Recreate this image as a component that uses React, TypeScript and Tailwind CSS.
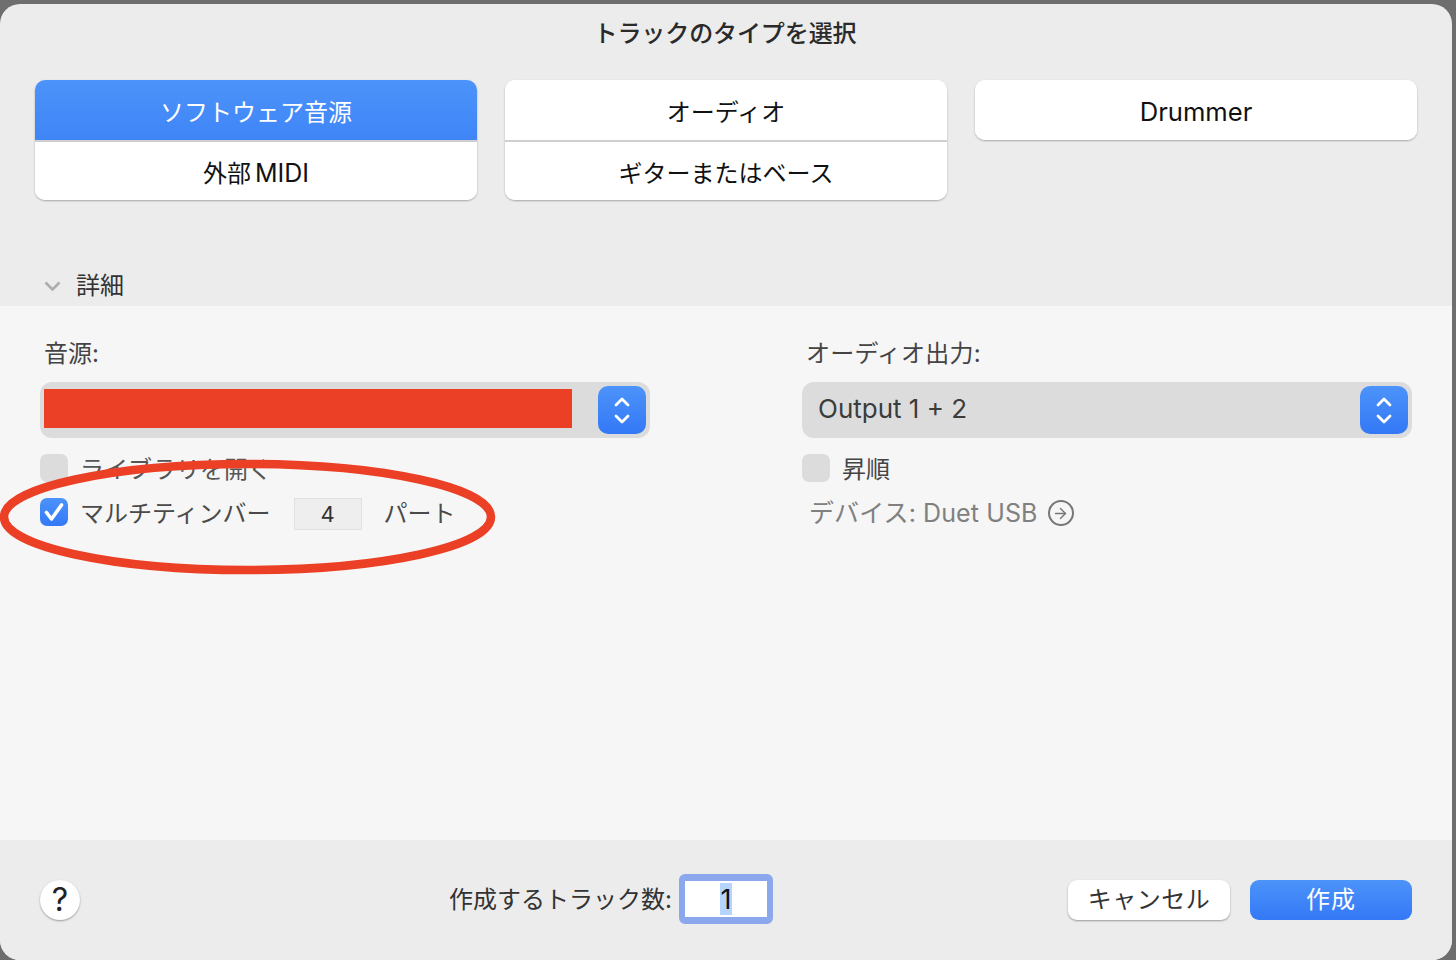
import type { ReactNode } from "react";
import { ArrowRight } from "lucide-react";

const font = "font-['Inter','Noto_Sans_CJK_JP',sans-serif]";

function TypeGroup({ items, selected }: { items: ReactNode[]; selected?: number }) {
  return (
    <div className="w-[442px] overflow-hidden rounded-[10px] bg-white shadow-[0_1px_2px_rgba(0,0,0,0.3)]">
      {items.map((item, i) => (
        <div
          key={i}
          className={
            i === 0
              ? "flex h-[60px] items-center justify-center pt-[6px] text-[24px] " +
                (i === selected
                  ? "bg-gradient-to-b from-[#4c93fa] to-[#3f85f7] text-white"
                  : "bg-white text-[#111]")
              : "flex h-[60px] items-center justify-center border-t-2 border-[#cfcfcf] bg-white pt-[6px] text-[24px] text-[#111]"
          }
        >
          {item}
        </div>
      ))}
    </div>
  );
}

function Stepper() {
  return (
    <div className="flex h-[48px] w-[48px] flex-col items-center justify-center gap-[7px] rounded-[10px] bg-gradient-to-b from-[#4c93fa] to-[#3478f6]">
      <svg width="16" height="10" viewBox="0 0 16 10" fill="none">
        <path d="M2 8l6-6 6 6" stroke="white" strokeWidth="2.8" strokeLinecap="round" strokeLinejoin="round" />
      </svg>
      <svg width="16" height="10" viewBox="0 0 16 10" fill="none">
        <path d="M2 2l6 6 6-6" stroke="white" strokeWidth="2.8" strokeLinecap="round" strokeLinejoin="round" />
      </svg>
    </div>
  );
}

function EmptyCheck() {
  return <div className="h-[28px] w-[28px] rounded-[7px] bg-[#dcdcdc]" />;
}

export default function App() {
  return (
    <div className={"h-[960px] w-[1456px] overflow-hidden bg-[#6e6e6e] pt-[4px] pr-[4px] " + font}>
      <div className="relative flex h-[956px] w-[1452px] flex-col overflow-hidden rounded-[20px] bg-[#ececec]">
        {/* Header */}
        <div className="flex h-[302px] flex-col">
          <div className="flex h-[58px] items-center justify-center pr-[2px] pt-[2px] text-[24px] font-medium tracking-[-0.1px] text-[#2a2a2a]">
            トラックのタイプを選択
          </div>
          <div className="mt-[18px] flex items-start gap-[28px] pl-[35px]">
            <TypeGroup
              items={[
                "ソフトウェア音源",
                <>
                  外部<span className="ml-[4px] text-[25px]">MIDI</span>
                </>,
              ]}
              selected={0}
            />
            <TypeGroup items={["オーディオ", "ギターまたはベース"]} />
            <TypeGroup items={[<span className="-mt-[2px] text-[25.6px]">Drummer</span>]} />
          </div>
          <div className="mt-[68px] flex items-center pl-[44px] text-[24px] text-[#333]">
            <svg width="17" height="10" viewBox="0 0 17 10" fill="none">
              <path d="M1.5 1.5l7 7 7-7" stroke="#adadad" strokeWidth="2.6" />
            </svg>
            <span className="ml-[15px]">詳細</span>
          </div>
        </div>

        {/* Details */}
        <div className="flex h-[534px] gap-[152px] bg-[#f6f6f6] pl-[40px] pt-[32px]">
          <div className="w-[610px]">
            <div className="pl-[4px] pt-[1px] text-[24px] leading-[30px] text-[#444]">音源:</div>
            <div className="mt-[13px] flex h-[56px] items-center justify-between rounded-[12px] bg-[#dcdcdc] pl-[4px] pr-[4px]">
              <div className="mb-[3px] h-[39px] w-[528px] bg-[#eb4025]" />
              <Stepper />
            </div>
            <div className="mt-[16px] flex h-[28px] items-center gap-[12px] text-[24px] text-[#555]">
              <EmptyCheck />
              <span className="pt-[4px]">ライブラリを開く</span>
            </div>
            <div className="mt-[16px] flex h-[28px] items-start text-[24px] text-[#4a4a4a]">
              <div className="flex h-[28px] w-[28px] items-center justify-center rounded-[7px] bg-gradient-to-b from-[#4c93fa] to-[#3478f6]">
                <svg width="22" height="20" viewBox="0 0 22 20" fill="none">
                  <path d="M3.5 10.5l5 6.5L18.5 3" stroke="white" strokeWidth="3.6" strokeLinecap="round" strokeLinejoin="round" />
                </svg>
              </div>
              <span className="ml-[12px] leading-[32px]">マルチティンバー</span>
              <div className="ml-[23px] flex h-[32px] w-[68px] shrink-0 items-center justify-center border border-[#e0e0e0] bg-[#eeeeee] text-[22px] text-[#333]">
                4
              </div>
              <span className="ml-[22px] leading-[32px]">パート</span>
            </div>
          </div>
          <div className="w-[610px]">
            <div className="pl-[4px] pt-[1px] text-[24px] leading-[30px] tracking-[0.2px] text-[#444]">オーディオ出力:</div>
            <div className="mt-[13px] flex h-[56px] items-center justify-between rounded-[12px] bg-[#dcdcdc] pl-[16px] pr-[4px]">
              <span className="pb-[4px] text-[26px] text-[#3c3c3c]">Output 1 + 2</span>
              <Stepper />
            </div>
            <div className="mt-[16px] flex h-[28px] items-center gap-[12px] text-[24px] text-[#444]">
              <EmptyCheck />
              <span className="pt-[4px]">昇順</span>
            </div>
            <div className="mt-[16px] flex h-[28px] items-center pl-[7px] text-[25px] tracking-[0.1px] text-[#808080]">
              <span className="pt-[4px]">デバイス: Duet USB</span>
              <div className="ml-[10px] mt-[2px] flex h-[26px] w-[26px] items-center justify-center rounded-full border-2 border-[#777]">
                <ArrowRight className="h-[17px] w-[17px] text-[#777]" strokeWidth={2} />
              </div>
            </div>
          </div>
        </div>

        {/* Footer */}
        <div className="flex h-[120px] items-start bg-[#ececec] pl-[40px] pr-[40px] pt-[40px]">
          <div className="flex h-[40px] w-[40px] items-center justify-center rounded-full bg-white text-[32px] text-[#222] shadow-[0_1px_2px_rgba(0,0,0,0.35)]">
            ?
          </div>
          <div className="ml-[369px] flex h-[40px] items-center text-[24px] text-[#333]">作成するトラック数:</div>
          <div className="-mt-[6px] ml-[7px] flex h-[50px] w-[94px] items-center justify-center rounded-[6px] border-x-[6px] border-y-[7px] border-[#8ba8ed] bg-white text-[27px] text-[#111]">
            <span className="h-[32px] w-[12px] bg-[#b5d5fd] pt-[1px] text-center leading-[32px]">1</span>
          </div>
          <div className="ml-auto flex gap-[20px]">
            <div className="flex h-[40px] w-[162px] items-center justify-center rounded-[9px] bg-white text-[24px] tracking-[0.5px] text-[#333] shadow-[0_1px_2px_rgba(0,0,0,0.35)]">
              キャンセル
            </div>
            <div className="flex h-[40px] w-[162px] items-center justify-center rounded-[9px] bg-gradient-to-b from-[#4c93fa] to-[#3478f6] text-[24px] tracking-[1px] text-white">
              作成
            </div>
          </div>
        </div>

        {/* Red annotation drawn over the window */}
        <svg className="absolute left-0 top-[-4px] h-[960px] w-[1456px]" viewBox="0 0 1456 960" fill="none">
          <ellipse cx="247.5" cy="517" rx="243.5" ry="53" stroke="#eb4025" strokeWidth="8.5" />
        </svg>
      </div>
    </div>
  );
}
